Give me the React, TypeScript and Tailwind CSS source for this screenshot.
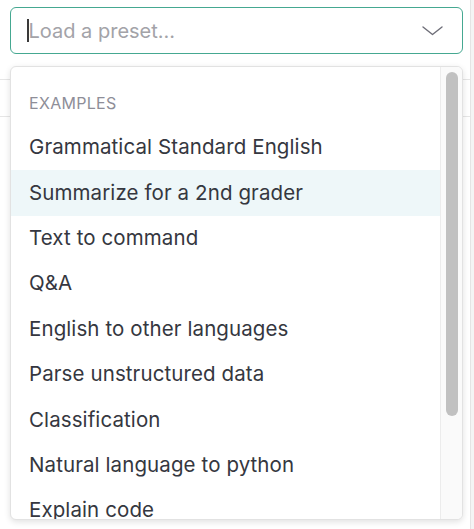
import React from "react";

const items = [
  "Grammatical Standard English",
  "Summarize for a 2nd grader",
  "Text to command",
  "Q&A",
  "English to other languages",
  "Parse unstructured data",
  "Classification",
  "Natural language to python",
  "Explain code",
];

export default function App() {
  return (
    <div
      className="relative w-[474px] h-[529px] overflow-hidden bg-white"
      style={{ fontFamily: "Inter, 'Noto Sans', sans-serif" }}
    >
      {/* background page lines */}
      <div className="absolute left-0 right-[4px] top-[79px] h-[38px] border-y border-[#e6e6e6]" />
      {/* right page strip */}
      <div className="absolute right-0 top-0 bottom-0 w-[4px] bg-[#f4f4f4] border-l border-[#e4e4e4]" />

      <div className="relative pl-[10px] pr-[11px] pt-[7px]">
        {/* input */}
        <div className="flex h-[47px] items-center rounded-[6px] border-[1.5px] border-[#45a891] bg-white pl-[16px] pr-[19px]">
          <div className="h-[23px] w-[1.5px] bg-[#3a3a3a]" />
          <span className="flex-1 text-[20px] text-[#a3a3a8] leading-none">Load a preset...</span>
          <svg width="21" height="12" viewBox="0 0 21 12" fill="none">
            <polyline points="1,2 10.5,9.5 20,2" stroke="#6e6e78" strokeWidth="1.4" strokeLinecap="round" strokeLinejoin="round" />
          </svg>
        </div>

        {/* dropdown */}
        <div className="mt-[12px] flex h-[454px] overflow-hidden rounded-[6px] border border-[#e2e2e2] bg-white shadow-[0_2px_6px_rgba(0,0,0,0.12)]">
          <div className="flex-1 overflow-hidden pt-[13px]">
            <div className="flex h-[45px] items-center pl-[18px] text-[16px] tracking-[0.3px] text-[#8e8e98]">EXAMPLES</div>
            {items.map((t, i) => (
              <div
                key={t}
                className={`flex h-[45.4px] items-center pl-[18px] text-[20.5px] tracking-[0.1px] text-[#353740] ${i === 1 ? "bg-[#eef7f9]" : ""}`}
              >
                {t}
              </div>
            ))}
          </div>
          <div className="w-[22px] shrink-0 border-l border-[#ececec] bg-[#fafafa] pt-[5px] pl-[5px]">
            <div className="h-[344px] w-[12px] rounded-full bg-[#c1c1c1]" />
          </div>
        </div>
      </div>
    </div>
  );
}
